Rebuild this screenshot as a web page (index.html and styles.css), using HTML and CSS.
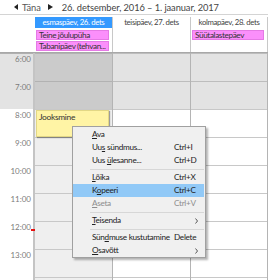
FILE: index.html
```html
<!DOCTYPE html>
<html lang="et">
<head>
    <meta charset="UTF-8">
    <meta name="viewport" content="width=device-width, initial-scale=1.0">
    <title>Kalender</title>
    <link rel="stylesheet" href="styles.css">
</head>
<body>

    <div class="toolbar">
        <span class="nav-arrow"><svg width="4" height="6" viewBox="0 0 4 6"><path d="M0 3L4 0v6z" fill="#222"/></svg></span>
        <span class="today">Täna</span>
        <span class="nav-arrow"><svg width="5" height="6" viewBox="0 0 5 6"><path d="M5 3L0 0v6z" fill="#222"/></svg></span>
        <span class="range">26. detsember, 2016 – 1. jaanuar, 2017</span>
    </div>

    <div class="head-row">
        <div class="corner"></div>
        <div class="day-head selected">esmaspäev, 26. dets</div>
        <div class="day-head">teisipäev, 27. dets</div>
        <div class="day-head">kolmapäev, 28. dets</div>
    </div>

    <div class="allday-row">
        <div class="corner"></div>
        <div class="allday">
            <div class="allday-event">Teine jõulupüha</div>
            <div class="allday-event">Tabanipäev (tehvan...</div>
        </div>
        <div class="allday"></div>
        <div class="allday">
            <div class="allday-event">Süütalastepäev</div>
        </div>
    </div>

    <div class="grid">
        <div class="times">
            <div class="slot off">6:00</div>
            <div class="slot off">7:00</div>
            <div class="slot">8:00</div>
            <div class="slot">9:00</div>
            <div class="slot">10:00</div>
            <div class="slot">11:00</div>
            <div class="slot">12:00<span class="now-marker"></span></div>
            <div class="slot">13:00</div>
            <div class="slot tail"></div>
        </div>
        <div class="day selected">
            <div class="slot off"></div>
            <div class="slot off"></div>
            <div class="slot"><div class="event">Jooksmine</div></div>
            <div class="slot"></div>
            <div class="slot"></div>
            <div class="slot"></div>
            <div class="slot"></div>
            <div class="slot"></div>
            <div class="slot tail"></div>
        </div>
        <div class="day">
            <div class="slot off"></div>
            <div class="slot off"></div>
            <div class="slot"></div>
            <div class="slot"></div>
            <div class="slot"></div>
            <div class="slot"></div>
            <div class="slot"></div>
            <div class="slot"></div>
            <div class="slot tail"></div>
        </div>
        <div class="day">
            <div class="slot off"></div>
            <div class="slot off"></div>
            <div class="slot"></div>
            <div class="slot"></div>
            <div class="slot"></div>
            <div class="slot"></div>
            <div class="slot"></div>
            <div class="slot"></div>
            <div class="slot tail"></div>
        </div>
    </div>

    <div class="context-menu">
        <div class="menu-item"><span><u>A</u>va</span></div>
        <div class="menu-item"><span>Uu<u>s</u> sündmus...</span><span>Ctrl+I</span></div>
        <div class="menu-item"><span>Uus <u>ü</u>lesanne...</span><span>Ctrl+D</span></div>
        <div class="menu-separator"></div>
        <div class="menu-item"><span><u>L</u>õika</span><span>Ctrl+X</span></div>
        <div class="menu-item active"><span>K<u>o</u>peeri</span><span>Ctrl+C</span></div>
        <div class="menu-item disabled"><span><u>A</u>seta</span><span>Ctrl+V</span></div>
        <div class="menu-separator"></div>
        <div class="menu-item"><span><u>T</u>eisenda</span><span></span><span class="submenu"><svg width="3" height="6" viewBox="0 0 3 6"><path d="M0.5 0.5L2.5 3L0.5 5.5" fill="none" stroke="#444" stroke-width="0.9"/></svg></span></div>
        <div class="menu-separator"></div>
        <div class="menu-item"><span>Sün<u>d</u>muse kustutamine</span><span>Delete</span></div>
        <div class="menu-item"><span><u>O</u>savõtt</span><span></span><span class="submenu"><svg width="3" height="6" viewBox="0 0 3 6"><path d="M0.5 0.5L2.5 3L0.5 5.5" fill="none" stroke="#444" stroke-width="0.9"/></svg></span></div>
    </div>

</body>
</html>
```

FILE: styles.css
```css
body {
    margin: 0;
    width: 268px;
    height: 280px;
    overflow: hidden;
    position: relative;
    font-family: Lato, "Noto Sans", sans-serif;
    color: #333;
    background: #fff;
}

.toolbar {
    display: flex;
    align-items: center;
    height: 14px;
    padding-left: 14px;
    border-bottom: 1px solid #d4d4d4;
    font-size: 9.3px;
    letter-spacing: -0.08px;
}

.nav-arrow {
    display: flex;
}

.today {
    margin: 0 7px 0 4px;
    color: #555;
}

.range {
    margin-left: 9px;
    color: #444;
}

.head-row,
.allday-row,
.grid {
    display: grid;
    grid-template-columns: 35px 78px 78px 77px;
}

.head-row {
    margin-top: 2px;
    height: 11px;
}

.day-head {
    border-right: 1px solid #c8c8c8;
    text-align: center;
    font-size: 7.8px;
    line-height: 11px;
    letter-spacing: -0.35px;
    color: #444;
    white-space: nowrap;
    overflow: hidden;
}

.day-head.selected {
    background-color: #3399ff;
    color: #fff;
}

.allday-row {
    height: 24px;
    border-bottom: 1px solid #a8a8a8;
}

.allday {
    border-right: 1px solid #c8c8c8;
    padding-top: 2px;
}

.allday-event {
    height: 10px;
    margin: 0 3px 1px 1px;
    padding-left: 2px;
    box-sizing: border-box;
    background-color: #fb8ffb;
    border: 1px solid #e57ae5;
    font-size: 8.2px;
    line-height: 8px;
    letter-spacing: -0.38px;
    color: #333;
    white-space: nowrap;
    overflow: hidden;
}

.times {
    border-right: 2px solid #c4c4c4;
}

.day {
    border-right: 1px solid #b4b4b4;
}

.slot {
    height: 28px;
    box-sizing: border-box;
    border-top: 1px solid #c8c8c8;
    background-color: #fff;
}

.slot.tail {
    height: 3px;
}

.slot:first-child {
    border-top-color: #b0b0b0;
}

.slot.off {
    background-color: #e3e3e3;
    border-top-color: #bdbdbd;
}

.day.selected .slot {
    background-color: #efefef;
}

.day.selected .slot.off {
    background-color: #cbcbcb;
    border-top-color: #b2b2b2;
}

.times .slot {
    position: relative;
    border-top-color: transparent;
    padding-right: 2px;
    text-align: right;
    font-size: 8px;
    line-height: 11px;
    color: #7c7c7c;
}

.times .slot:first-child {
    border-top-color: #b0b0b0;
}

.now-marker {
    position: absolute;
    right: -2px;
    top: 7px;
    width: 4px;
    height: 2px;
    background-color: #e81010;
}

.event {
    position: relative;
    height: 27px;
    margin: 0 3px 0 1px;
    padding: 1px 2px;
    box-sizing: border-box;
    background-color: #fff4a5;
    border: 1px solid #e2d785;
    box-shadow: 1px 1px 1px rgba(0, 0, 0, 0.35);
    font-size: 8.4px;
    line-height: 10px;
    letter-spacing: -0.3px;
    color: #333;
}

.context-menu {
    position: absolute;
    left: 72px;
    top: 126px;
    width: 134px;
    box-sizing: border-box;
    padding: 1px 1px 0 0;
    background-color: #f0f0f0;
    border: 1px solid #a0a0a0;
    box-shadow: 2px 2px 2px rgba(0, 0, 0, 0.3);
    font-size: 8.2px;
    letter-spacing: -0.3px;
    color: #222;
}

.menu-item {
    display: grid;
    grid-template-columns: 82px 21px 1fr;
    height: 13px;
    line-height: 13px;
    padding-left: 19px;
    white-space: nowrap;
}

.menu-item.active {
    background-color: #91c9f7;
}

.menu-item.disabled {
    color: #8d8d8d;
}

.submenu {
    display: flex;
    align-items: center;
}

.menu-separator {
    height: 4px;
    margin-left: 17px;
    background: linear-gradient(#d7d7d7, #d7d7d7) center / 100% 1px no-repeat;
}
```
